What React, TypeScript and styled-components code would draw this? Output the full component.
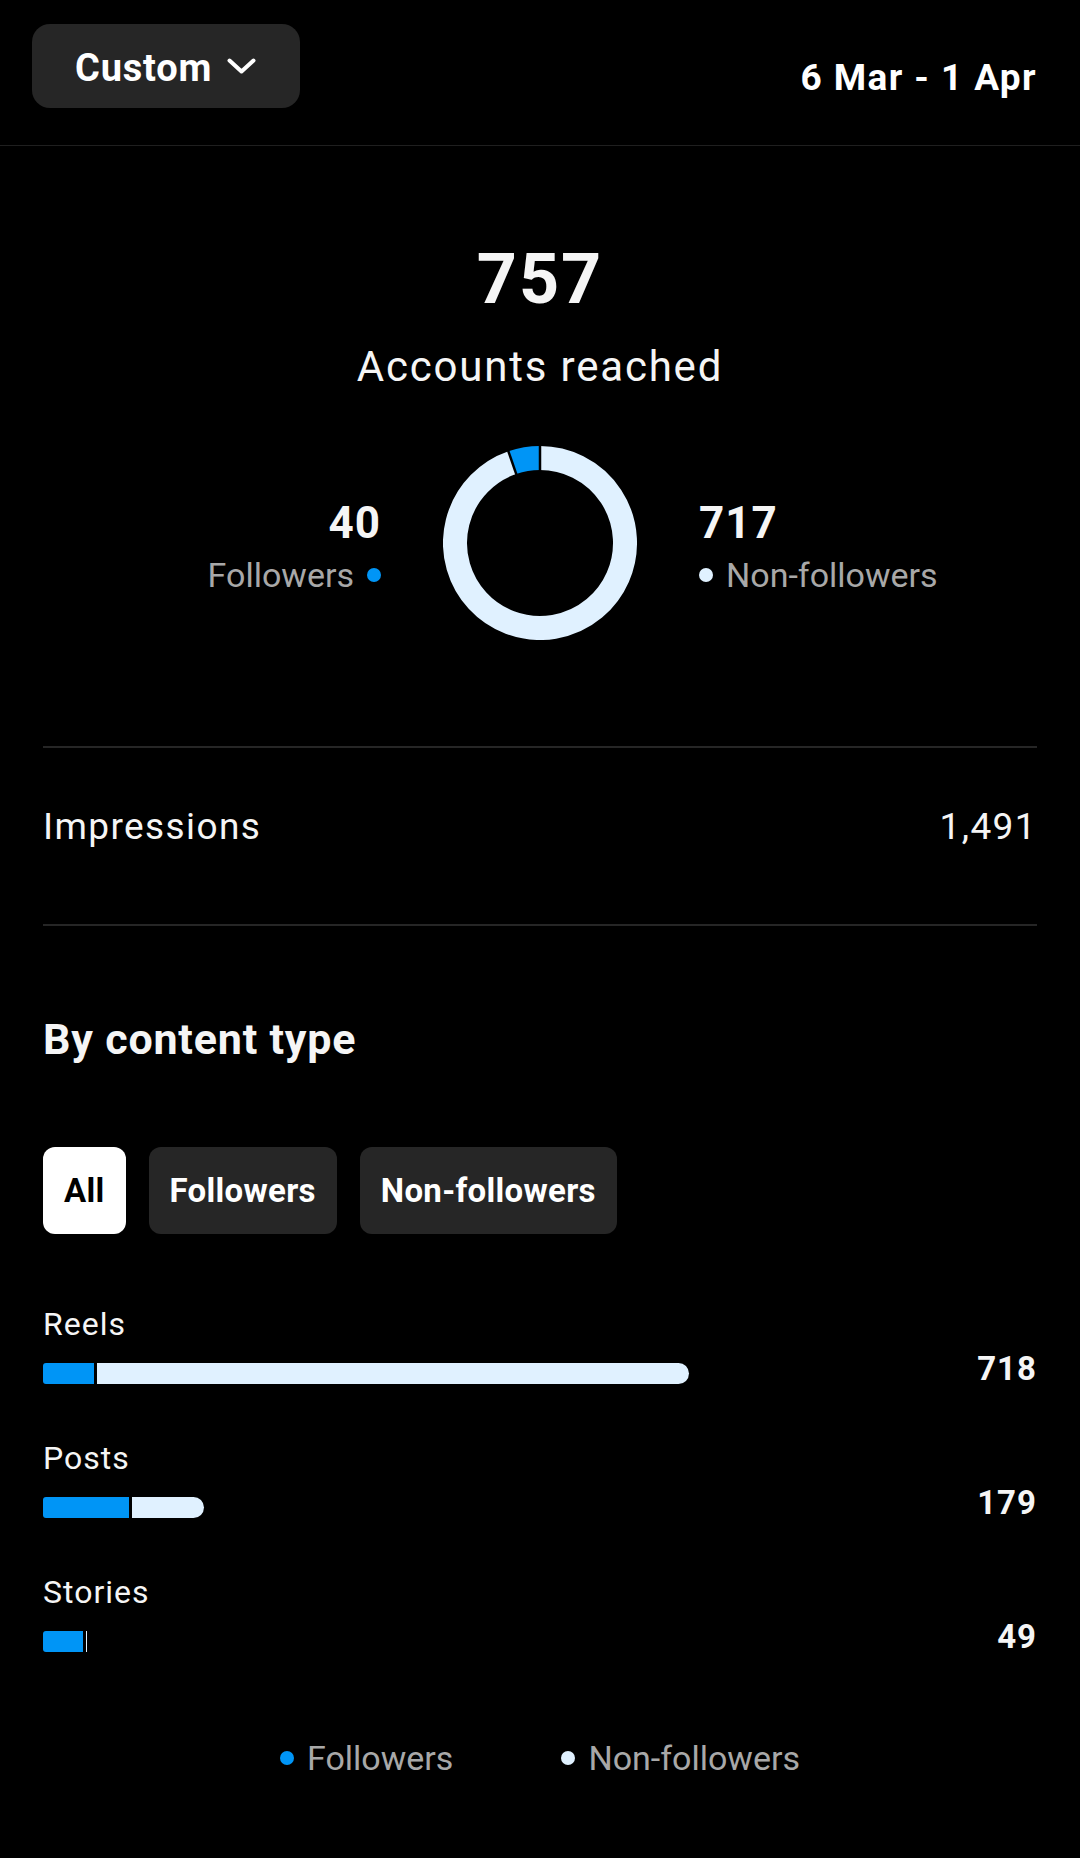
import React from "react";
import styled, { createGlobalStyle } from "styled-components";

const BLUE = "#0095f6";
const LIGHT = "#e0f1ff";
const TEXT = "#f5f5f5";
const MUTED = "#a8a8a8";
const SURFACE = "#262626";

const GlobalStyle = createGlobalStyle`
  html, body {
    margin: 0;
    padding: 0;
    background: #000;
  }
  body {
    font-family: Roboto, "Noto Sans", "Liberation Sans", sans-serif;
    color: ${TEXT};
    -webkit-font-smoothing: antialiased;
  }
  * { box-sizing: border-box; }
`;

const Page = styled.div`
  width: 1080px;
  min-height: 1858px;
  background: #000;
  display: flex;
  flex-direction: column;
`;

const Header = styled.header`
  display: flex;
  align-items: center;
  justify-content: space-between;
  padding: 24px 43px 37px 32px;
  border-bottom: 1px solid #1f1f1f;
`;

const RangeButton = styled.button`
  display: flex;
  align-items: center;
  gap: 15px;
  height: 84px;
  width: 268px;
  padding: 4px 0 0 43px;
  border: none;
  border-radius: 18px;
  background: ${SURFACE};
  color: #fff;
  font-family: Roboto, sans-serif;
  font-weight: 700;
  font-size: 38px;
  letter-spacing: 0.8px;
  line-height: 1;
`;

const DateLabel = styled.div`
  padding-top: 24px;
  font-weight: 700;
  font-size: 37px;
  letter-spacing: 1.4px;
  line-height: 44px;
  color: #fff;
`;

const Reach = styled.section`
  display: flex;
  flex-direction: column;
  align-items: center;
  padding-top: 93px;
`;

const BigNumber = styled.div`
  font-weight: 700;
  font-size: 70px;
  line-height: 80px;
  letter-spacing: 2px;
`;

const ReachLabel = styled.div`
  margin-top: 23px;
  font-size: 42px;
  line-height: 50px;
  letter-spacing: 1.8px;
`;

const DonutRow = styled.div`
  margin-top: 54px;
  width: 100%;
  display: grid;
  grid-template-columns: 1fr auto 1fr;
  align-items: center;
  column-gap: 62px;
`;

const SideStat = styled.div<{ $align: "start" | "end" }>`
  display: flex;
  flex-direction: column;
  align-items: ${(p) => (p.$align === "end" ? "flex-end" : "flex-start")};
  gap: 6px;
  margin-top: 6px;
`;

const SideNumber = styled.div`
  font-weight: 700;
  font-size: 44px;
  line-height: 52px;
  letter-spacing: 1px;
`;

const SideLabel = styled.div`
  display: flex;
  align-items: center;
  gap: 13px;
  font-size: 34px;
  line-height: 40px;
  color: ${MUTED};
`;

const Dot = styled.span<{ $color: string }>`
  display: inline-block;
  width: 14px;
  height: 14px;
  border-radius: 50%;
  background: ${(p) => p.$color};
  flex-shrink: 0;
`;

const Content = styled.div`
  padding: 0 43px;
  display: flex;
  flex-direction: column;
`;

const Divider = styled.div<{ $top: number }>`
  margin-top: ${(p) => p.$top}px;
  height: 2px;
  background: #262626;
`;

const MetricRow = styled.div`
  display: flex;
  justify-content: space-between;
  align-items: center;
  padding: 57px 0 75px;
  font-size: 37px;
  line-height: 44px;
  letter-spacing: 1.4px;
`;

const SectionTitle = styled.h2`
  margin: 87px 0 0;
  font-weight: 700;
  font-size: 43px;
  line-height: 52px;
  letter-spacing: 0.8px;
`;

const ChipRow = styled.div`
  margin-top: 82px;
  display: flex;
  gap: 23px;
`;

const Chip = styled.button<{ $active?: boolean }>`
  height: 87px;
  padding: 0 21px;
  border: none;
  border-radius: 12px;
  background: ${(p) => (p.$active ? "#fff" : SURFACE)};
  color: ${(p) => (p.$active ? "#000" : "#fff")};
  font-family: Roboto, sans-serif;
  font-weight: 700;
  font-size: 33px;
  letter-spacing: 0.3px;
  line-height: 1;
`;

const BarList = styled.div`
  margin-top: 71px;
  display: flex;
  flex-direction: column;
  gap: 55px;
`;

const BarItem = styled.div`
  display: flex;
  flex-direction: column;
  gap: 20px;
`;

const BarLabel = styled.div`
  font-size: 32px;
  line-height: 38px;
  letter-spacing: 1px;
`;

const BarRow = styled.div`
  height: 21px;
  display: flex;
  align-items: center;
  justify-content: space-between;
`;

const Bar = styled.div`
  height: 21px;
  display: flex;
`;

const FollowerPart = styled.div`
  height: 100%;
  flex-shrink: 0;
  background: ${BLUE};
  border-radius: 3px 0 0 3px;
`;

const OtherPart = styled.div<{ $round: boolean }>`
  flex: 1;
  margin-left: 3px;
  height: 100%;
  background: ${LIGHT};
  border-radius: ${(p) => (p.$round ? "0 11px 11px 0" : "0")};
`;

const BarValue = styled.div`
  font-weight: 700;
  font-size: 33px;
  line-height: 40px;
  letter-spacing: 1px;
  margin-bottom: 9px;
`;

const Legend = styled.div`
  margin-top: 87px;
  display: flex;
  justify-content: center;
  gap: 108px;
`;

const LegendItem = styled.div`
  display: flex;
  align-items: center;
  gap: 13px;
  font-size: 34px;
  line-height: 38px;
  color: ${MUTED};
`;

const Donut: React.FC<{ part: number; total: number }> = ({ part, total }) => {
  const size = 194;
  const c = size / 2;
  const r = 85;
  const sw = 24;
  const angle = (part / total) * 360;
  const pt = (deg: number, rad: number) => {
    const a = ((deg - 90) * Math.PI) / 180;
    return [c + rad * Math.cos(a), c + rad * Math.sin(a)];
  };
  const [sx, sy] = pt(-angle, r);
  const [ex, ey] = pt(0, r);
  const [lx, ly] = pt(360 - angle, r);
  const sep = (deg: number) => {
    const [x1, y1] = pt(deg, r - sw / 2 - 1);
    const [x2, y2] = pt(deg, r + sw / 2 + 1);
    return <line x1={x1} y1={y1} x2={x2} y2={y2} stroke="#000" strokeWidth={2.5} />;
  };
  return (
    <svg width={size} height={size} viewBox={`0 0 ${size} ${size}`}>
      <path
        d={`M ${ex} ${ey} A ${r} ${r} 0 1 1 ${lx} ${ly}`}
        fill="none"
        stroke={LIGHT}
        strokeWidth={sw}
      />
      <path
        d={`M ${sx} ${sy} A ${r} ${r} 0 0 1 ${ex} ${ey}`}
        fill="none"
        stroke={BLUE}
        strokeWidth={sw}
      />
      {sep(0)}
      {sep(-angle)}
    </svg>
  );
};

const ChevronIcon = styled.svg`
  margin-top: -4px;
  flex-shrink: 0;
`;

const Chevron = () => (
  <ChevronIcon width="29" height="16" viewBox="0 0 29 16">
    <polyline
      points="2.5,2.5 14.5,13.5 26.5,2.5"
      fill="none"
      stroke="#fff"
      strokeWidth="4"
      strokeLinecap="round"
      strokeLinejoin="round"
    />
  </ChevronIcon>
);

const MAX_VALUE = 718;
const MAX_PX = 646;

const rows = [
  { label: "Reels", total: 718, followers: 57, round: true },
  { label: "Posts", total: 179, followers: 96, round: true },
  { label: "Stories", total: 49, followers: 44.5, round: false },
];

export default function App() {
  return (
    <Page>
      <GlobalStyle />
      <Header>
        <RangeButton>
          Custom
          <Chevron />
        </RangeButton>
        <DateLabel>6 Mar - 1 Apr</DateLabel>
      </Header>

      <Reach>
        <BigNumber>757</BigNumber>
        <ReachLabel>Accounts reached</ReachLabel>
        <DonutRow>
          <SideStat $align="end">
            <SideNumber>40</SideNumber>
            <SideLabel>
              Followers
              <Dot $color={BLUE} />
            </SideLabel>
          </SideStat>
          <Donut part={40} total={757} />
          <SideStat $align="start">
            <SideNumber>717</SideNumber>
            <SideLabel>
              <Dot $color={LIGHT} />
              Non-followers
            </SideLabel>
          </SideStat>
        </DonutRow>
      </Reach>

      <Content>
        <Divider $top={106} />
        <MetricRow>
          <span>Impressions</span>
          <span>1,491</span>
        </MetricRow>
        <Divider $top={0} />
        <SectionTitle>By content type</SectionTitle>
        <ChipRow>
          <Chip $active>All</Chip>
          <Chip>Followers</Chip>
          <Chip>Non-followers</Chip>
        </ChipRow>
        <BarList>
          {rows.map((r) => {
            const w = (r.total / MAX_VALUE) * MAX_PX;
            const fw = (r.followers / MAX_VALUE) * MAX_PX;
            return (
              <BarItem key={r.label}>
                <BarLabel>{r.label}</BarLabel>
                <BarRow>
                  <Bar style={{ width: w }}>
                    <FollowerPart style={{ width: fw }} />
                    <OtherPart $round={r.round} />
                  </Bar>
                  <BarValue>{r.total}</BarValue>
                </BarRow>
              </BarItem>
            );
          })}
        </BarList>
        <Legend>
          <LegendItem>
            <Dot $color={BLUE} />
            Followers
          </LegendItem>
          <LegendItem>
            <Dot $color={LIGHT} />
            Non-followers
          </LegendItem>
        </Legend>
      </Content>
    </Page>
  );
}
